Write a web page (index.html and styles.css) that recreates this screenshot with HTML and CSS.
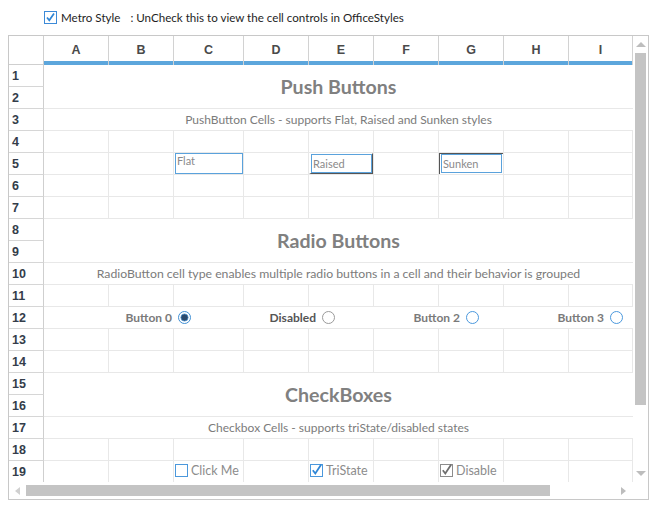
FILE: index.html
```html
<!DOCTYPE html>
<html>
<head>
<meta charset="utf-8">
<link rel="stylesheet" href="styles.css">
</head>
<body>
<div class="topbar">
  <svg class="tbox" width="13" height="13" viewBox="0 0 13 13"><rect x="0.5" y="0.5" width="12" height="12" fill="#fff" stroke="#3c8ad8"/><path d="M3 6.5 L5.3 9.3 L10 2.5" fill="none" stroke="#2f86d6" stroke-width="1.7"/></svg>
  <span class="tlbl">Metro Style</span>
  <span class="thint">: UnCheck this to view the cell controls in OfficeStyles</span>
</div>
<div class="frame">
  <div class="viewport">
    <div class="sheet">
      <div class="corner"></div>
      <div class="ch">A</div><div class="ch">B</div><div class="ch">C</div><div class="ch">D</div><div class="ch">E</div><div class="ch">F</div><div class="ch">G</div><div class="ch">H</div><div class="ch">I</div>

      <div class="rh">1</div><div class="title">Push Buttons</div>
      <div class="rh">2</div>
      <div class="rh">3</div><div class="wide note">PushButton Cells - supports Flat, Raised and Sunken styles</div>
      <div class="rh">4</div><div class="c"></div><div class="c"></div><div class="c"></div><div class="c"></div><div class="c"></div><div class="c"></div><div class="c"></div><div class="c"></div><div class="c"></div>
      <div class="rh">5</div><div class="c"></div><div class="c"></div>
      <div class="c"><div class="flat">Flat</div></div>
      <div class="c"></div>
      <div class="c"><div class="raised"><div class="pb">Raised</div></div></div>
      <div class="c"></div>
      <div class="c"><div class="sunken"><div class="pb">Sunken</div></div></div>
      <div class="c"></div><div class="c"></div>
      <div class="rh">6</div><div class="c"></div><div class="c"></div><div class="c"></div><div class="c"></div><div class="c"></div><div class="c"></div><div class="c"></div><div class="c"></div><div class="c"></div>
      <div class="rh">7</div><div class="c"></div><div class="c"></div><div class="c"></div><div class="c"></div><div class="c"></div><div class="c"></div><div class="c"></div><div class="c"></div><div class="c"></div>

      <div class="rh">8</div><div class="title">Radio Buttons</div>
      <div class="rh">9</div>
      <div class="rh">10</div><div class="wide note wider">RadioButton cell type enables multiple radio buttons in a cell and their behavior is grouped</div>
      <div class="rh">11</div><div class="c"></div><div class="c"></div><div class="c"></div><div class="c"></div><div class="c"></div><div class="c"></div><div class="c"></div><div class="c"></div><div class="c"></div>
      <div class="rh">12</div>
      <div class="wide radios">
        <div class="ropt"><span>Button 0</span><svg width="13" height="13" viewBox="0 0 13 13"><circle cx="6.5" cy="6.5" r="6" fill="#fff" stroke="#3f8fd4"/><circle cx="6.5" cy="6.5" r="3.6" fill="#2b4a6d" stroke="#4b92cf" stroke-width="0.8"/></svg></div>
        <div class="ropt dis"><span>Disabled</span><svg width="13" height="13" viewBox="0 0 13 13"><circle cx="6.5" cy="6.5" r="6" fill="#fff" stroke="#9a9a9a"/></svg></div>
        <div class="ropt"><span>Button 2</span><svg width="13" height="13" viewBox="0 0 13 13"><circle cx="6.5" cy="6.5" r="6" fill="#fff" stroke="#4b98dc"/></svg></div>
        <div class="ropt"><span>Button 3</span><svg width="13" height="13" viewBox="0 0 13 13"><circle cx="6.5" cy="6.5" r="6" fill="#fff" stroke="#4b98dc"/></svg></div>
      </div>
      <div class="rh">13</div><div class="c"></div><div class="c"></div><div class="c"></div><div class="c"></div><div class="c"></div><div class="c"></div><div class="c"></div><div class="c"></div><div class="c"></div>
      <div class="rh">14</div><div class="c"></div><div class="c"></div><div class="c"></div><div class="c"></div><div class="c"></div><div class="c"></div><div class="c"></div><div class="c"></div><div class="c"></div>

      <div class="rh">15</div><div class="title">CheckBoxes</div>
      <div class="rh">16</div>
      <div class="rh">17</div><div class="wide note">Checkbox Cells - supports triState/disabled states</div>
      <div class="rh">18</div><div class="c"></div><div class="c"></div><div class="c"></div><div class="c"></div><div class="c"></div><div class="c"></div><div class="c"></div><div class="c"></div><div class="c"></div>
      <div class="rh">19</div><div class="c"></div><div class="c"></div>
      <div class="c chk"><svg width="13" height="13" viewBox="0 0 13 13"><rect x="0.5" y="0.5" width="12" height="12" fill="#fff" stroke="#4b98dc"/></svg><span>Click Me</span></div>
      <div class="c"></div>
      <div class="c chk"><svg width="13" height="13" viewBox="0 0 13 13" overflow="visible"><rect x="0.5" y="0.5" width="12" height="12" fill="#fff" stroke="#4b98dc"/><path d="M2.8 6.3 L5.3 9.5 L11.2 0.5" fill="none" stroke="#2f86d6" stroke-width="1.8"/></svg><span>TriState</span></div>
      <div class="c"></div>
      <div class="c chk"><svg width="13" height="13" viewBox="0 0 13 13" overflow="visible"><rect x="0.5" y="0.5" width="12" height="12" fill="#fff" stroke="#8c8c8c"/><path d="M2.8 6.3 L5.3 9.5 L11.2 0.5" fill="none" stroke="#6e6e6e" stroke-width="1.8"/></svg><span>Disable</span></div>
      <div class="c"></div><div class="c"></div>
    </div>
  </div>
  <div class="vscroll">
    <div class="arr-up"></div>
    <div class="vthumb"></div>
    <div class="arr-down"></div>
  </div>
  <div class="hscroll">
    <div class="arr-left"></div>
    <div class="hthumb"></div>
    <div class="arr-right"></div>
  </div>
  <div class="sc-corner"></div>
</div>
</body>
</html>
```

FILE: styles.css
```css
* { box-sizing: border-box; }
body {
  margin: 0;
  background: #fff;
  font-family: Lato, "Open Sans", sans-serif;
}
.topbar {
  height: 35px;
  display: flex;
  align-items: center;
  padding-left: 44px;
  font-size: 11.6px;
  color: #1e1e1e;
}
.tbox { display: block; margin-right: 4px; }
.tlbl { margin-right: 10px; }

.frame {
  margin-left: 8px;
  width: 641px;
  height: 465px;
  border: 1px solid #c8c8c8;
  display: grid;
  grid-template-columns: 624px 15px;
  grid-template-rows: 446px 17px;
}
.viewport { overflow: hidden; }
.sheet {
  display: grid;
  grid-template-columns: 35px 65px 65px 70px repeat(5, 65px) 64px;
  grid-template-rows: 29px repeat(19, 22px);
}
.corner {
  border-right: 1px solid #cfcfcf;
  border-bottom: 1px solid #cfcfcf;
}
.ch {
  border-right: 1px solid #d2d2d2;
  background: linear-gradient(#5ca6dc, #5ca6dc) bottom / 100% 4px no-repeat;
  font: bold 12.5px "Liberation Sans", sans-serif;
  color: #4a4a4a;
  display: flex;
  align-items: center;
  justify-content: center;
  padding: 2px 0 4px;
}
.rh {
  border-right: 1px solid #cfcfcf;
  border-bottom: 1px solid #d6d6d6;
  font: bold 12.5px "Liberation Sans", sans-serif;
  color: #343d4a;
  display: flex;
  align-items: center;
  padding-left: 3px;
}
.c {
  border-right: 1px solid #e8e8e8;
  border-bottom: 1px solid #e8e8e8;
}
.title {
  grid-column: span 9;
  grid-row: span 2;
  border-bottom: 1px solid #e8e8e8;
  display: flex;
  align-items: center;
  justify-content: center;
  padding-bottom: 1px;
  font-weight: bold;
  font-size: 19.6px;
  color: #808080;
}
.wide {
  grid-column: span 9;
  border-bottom: 1px solid #e8e8e8;
  display: flex;
  align-items: center;
}
.note {
  justify-content: center;
  font-size: 12px;
  color: #7b7b7b;
}
.note.wider { font-size: 12.25px; }

/* push buttons */
.flat {
  margin-left: 1px;
  width: 68px;
  height: 21px;
  border: 1px solid #5aa2dc;
  padding: 0 1px;
  font-size: 11px;
  line-height: 14px;
  color: #8a8a8a;
}
.raised {
  width: 64px;
  height: 21px;
  border-style: solid;
  border-width: 1px 1px 1px 2px;
  border-color: #fff #555 #555 #fff;
}
.sunken {
  width: 64px;
  height: 21px;
  border-top: 1px solid #555;
  border-left: 1px solid #555;
  padding: 0 1px 1px 1px;
}
.pb {
  height: 100%;
  border: 1px solid #5aa2dc;
  padding: 0 1px;
  font-size: 11px;
  line-height: 17px;
  color: #8a8a8a;
}

/* radios */
.radios { padding: 0 9px 0 3px; }
.ropt {
  flex: 0 0 144px;
  display: flex;
  justify-content: flex-end;
  align-items: center;
  gap: 6px;
  font-weight: bold;
  font-size: 12px;
  color: #7a7a7a;
}
.ropt svg { display: block; }
.ropt.dis { color: #555; }

/* checkboxes */
.chk {
  display: flex;
  align-items: center;
  gap: 3px;
  padding: 0 0 3px 1px;
  font-size: 12.5px;
  color: #8c8c8c;
}
.chk svg { display: block; flex: none; }

/* scrollbars */
.vscroll {
  display: flex;
  flex-direction: column;
  align-items: flex-start;
}
.arr-up {
  width: 0; height: 0;
  border-left: 5px solid transparent;
  border-right: 5px solid transparent;
  border-bottom: 5px solid #bdbdbd;
  margin: 6px 0 0 3px;
}
.vthumb {
  width: 11px;
  height: 352px;
  margin: 6px 0 0 2px;
  background: #c4c4c4;
}
.arr-down {
  width: 0; height: 0;
  border-left: 5px solid transparent;
  border-right: 5px solid transparent;
  border-top: 5px solid #bdbdbd;
  margin: auto 0 6px 3px;
}
.hscroll {
  display: flex;
  align-items: center;
}
.arr-left {
  width: 0; height: 0;
  border-top: 4px solid transparent;
  border-bottom: 4px solid transparent;
  border-right: 5px solid #d0d0d0;
  margin-left: 6px;
}
.hthumb {
  width: 524px;
  height: 11px;
  margin-left: 6px;
  background: #c4c4c4;
}
.arr-right {
  width: 0; height: 0;
  border-top: 4px solid transparent;
  border-bottom: 4px solid transparent;
  border-left: 5px solid #bdbdbd;
  margin: 0 7px 0 auto;
}
```
